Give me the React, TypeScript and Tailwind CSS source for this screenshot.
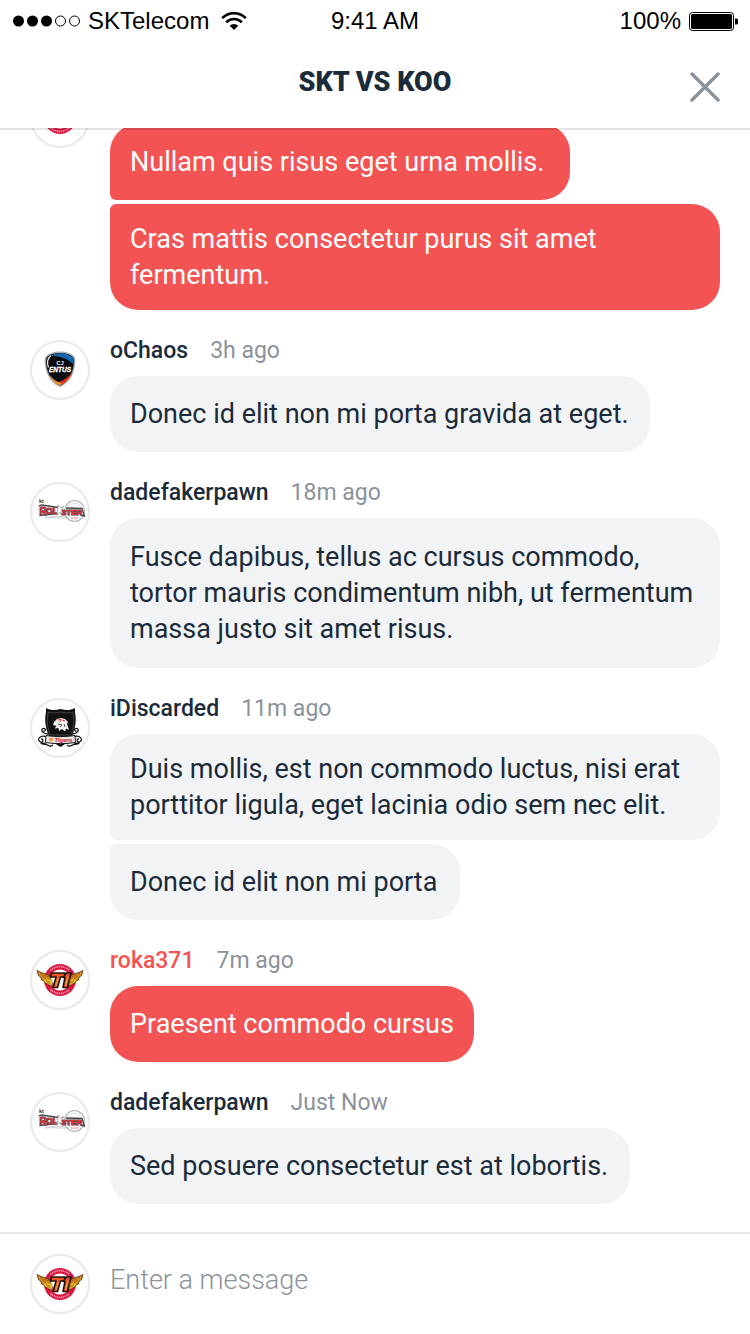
import type { ReactNode } from "react";

function T1Logo() {
  return (
    <svg viewBox="0 0 60 60" className="size-full" role="img" aria-label="SKT T1">
      <circle cx="30" cy="30" r="16" fill="#dc1740" />
      <circle cx="30" cy="30" r="10.500" fill="#fff" />
      <path d="M20.500 20.500a13.400 13.400 0 0 1 19 0M20.500 39.500a13.400 13.400 0 0 0 19 0" fill="none" stroke="#f6a9b7" strokeWidth="1.600" strokeDasharray="1.200 .7" />
      <path d="M7 20.500c4 2.500 9 3 13 5.500l3.500 10.500-4.500-1-1-1.500-3-1-1-2-2.500-1-.5-2.500-2.500-2Z" fill="#d98a1c" stroke="#4a3014" strokeWidth=".8" />
      <path d="M53 20.500c-4 2.500-9 3-13 5.500l-3.500 10.500 4.500-1 1-1.500 3-1 1-2 2.500-1 .5-2.500 2.500-2Z" fill="#d98a1c" stroke="#4a3014" strokeWidth=".8" />
      <path d="m16 28.500 5 2 .5 4M14.500 30.500l5 3.500M44 28.500l-5 2-.5 4M45.500 30.500l-5 3.500" fill="none" stroke="#eed12c" strokeWidth="1.600" />
      <path d="m10 23.500 10 4M12.500 26.500l7 3M16 31.500l4 2M50 23.500l-10 4M47.500 26.500l-7 3M44 31.500l-4 2" stroke="#7a4a18" strokeWidth=".6" />
      <path d="M21.500 23h13.500l-1 4h-3.500L27.500 37.500h-4.500L26 27h-5.500ZM36.500 23h4.500l-3.500 14.500h-4.500l2-10h-2Z" fill="#ee5528" stroke="#20130f" strokeWidth="1.600" strokeLinejoin="round" />
      <path d="m28.500 28-2.500 8M38 27l-2.500 9" stroke="#f59a31" strokeWidth="1.200" />
    </svg>
  );
}

function EntusLogo() {
  return (
    <svg viewBox="0 0 60 60" className="size-full" role="img" aria-label="CJ Entus">
      <path d="M30 11.500c6 0 11 1.500 14 4.500 2 2.500 1.500 7 .5 12-1.500 8-7 16-14.500 19-7.500-3-13-11-14.500-19-1-5-1.500-9.500.5-12 3-3 8-4.500 14-4.500Z" fill="#a9abad" />
      <path d="M30 13c5.500 0 10.200 1.300 12.800 4 1.700 2.300 1.200 6.500.3 11-1.500 7.500-6.500 14.500-13.100 17.500-6.600-3-11.600-10-13.100-17.500-.9-4.500-1.400-8.700.3-11 2.600-2.700 7.300-4 12.800-4Z" fill="#0b0c10" />
      <path d="M21 15.500c7-3.500 16-3 21.500 1.500 1.500 2 1 4.500.8 7.500-4-5-11-8-22.300-9Z" fill="#1767ad" />
      <path d="M42.500 32c-2 6-6 10.500-12.500 13.500-1-.5-1.500-1.500-2-3 6-2 10.500-5.500 14.500-10.500Z" fill="#e6371e" />
      <path d="M19.500 35c2 4.500 5.500 8.500 10.500 10.500l1.500-2.500c-5-1-8.500-4-12-8Z" fill="#f49b20" />
      <path d="M21 15.500c-3.500 3-4 8-2.500 12" fill="none" stroke="#e8e8e8" strokeWidth="1.200" />
      <text x="30" y="25" textAnchor="middle" fill="#e4e4e4" fontFamily="Liberation Sans, sans-serif" fontSize="6" fontWeight="700">CJ</text>
      <text x="30" y="32" textAnchor="middle" fill="#fff" stroke="#fff" strokeWidth=".3" fontFamily="Liberation Sans, sans-serif" fontSize="6.500" fontWeight="700" fontStyle="italic">ENTUS</text>
    </svg>
  );
}

function RolsterLogo() {
  return (
    <svg viewBox="0 0 60 60" className="size-full" role="img" aria-label="KT Rolster">
      <ellipse cx="44.500" cy="29" rx="10" ry="10.500" fill="#f9f9f9" stroke="#b4b6b8" strokeWidth="1.200" />
      <ellipse cx="44.500" cy="29" rx="7.500" ry="8" fill="none" stroke="#dcddde" strokeWidth=".8" />
      <path d="M38 35.500c-8-1.500-16-2-23 .5 8-1 17 .5 24 0" fill="none" stroke="#c8c8c8" strokeWidth=".9" />
      <path d="m8.500 24 3-1 17 2.500M36 26l16 .5 2.500 7.500-4-1M9.500 33.500 27 31.500" fill="none" stroke="#4a4245" strokeWidth="1.300" />
      <text x="9" y="21" fill="#343036" fontFamily="Liberation Sans, sans-serif" fontSize="5.500" fontWeight="700">kt</text>
      <g fill="#ee2c37" stroke="#574a4e" strokeWidth="1.200" paintOrder="stroke" fontFamily="Liberation Sans, sans-serif" fontWeight="700">
        <text x="9.500" y="32.500" fontSize="10">R</text>
        <text x="16" y="32" fontSize="8.500">OL</text>
        <text x="31" y="32.500" fontSize="8">STER</text>
      </g>
      <path d="m28 23 2.500 3 3-1.500-2 3.500 1 4-3-1.500-3 2 1-4Z" fill="#fff" stroke="#666" strokeWidth=".6" />
      <path d="M41 36h7" stroke="#ec6870" strokeWidth="1.200" strokeDasharray="1.500 1" />
    </svg>
  );
}

function TigersLogo() {
  return (
    <svg viewBox="0 0 60 60" className="size-full" role="img" aria-label="KOO Tigers">
      <g fill="none" stroke="#151515" strokeWidth="1.300">
        <path d="M18 36c-5 0-8-4-5-5.500 3-1 3 3 .5 2.500M17 39c-7-3-11 3-6.500 5 3 .5 3-3.500.5-3M20 48c-5-3-9-1-9-3 6-1 7 6 12 2M42 36c5 0 8-4 5-5.500-3-1-3 3-.5 2.500M43 39c7-3 11 3 6.500 5-3 .5-3-3.500-.5-3M40 48c5-3 9-1 9-3-6-1-7 6-12 2" />
      </g>
      <path d="M16 10c5 2.500 9 2.500 14.500 1 5.500 1.500 9.500 1.500 14.500-1-.5 5 1.500 9 .5 15.500C44 37 38.500 45 30.500 49c-8-4-14-12-15-23.500-1-6.500 1-10.500.5-15.500Z" fill="#101010" />
      <path d="M18 14c4 1.500 8 1 12.500 0 4.500 1 8.500 1.500 12.500 0 0 5 1.500 8 .5 13-.7 4-1.500 7-3 10h-20c-1.500-3-2.300-6-3-10-1-5 .5-8 .5-13Z" fill="none" stroke="#666" strokeWidth=".6" />
      <path d="m24 24 3-3 4-1 4 1 3 3-1 2 2 6-3-1.500-1 3-3-2.500-3 2-.5-3-4 .5 2-2.500-3.500-1Z" fill="#f5f5f5" />
      <path d="m28 22 3-1-1 3M32 22l3 1" fill="none" stroke="#d63b48" strokeWidth="1" />
      <path d="m28 26 4 1-2 2M34 26l1 3" fill="none" stroke="#222" strokeWidth=".8" />
      <path d="M16 37.500c10 1.500 19 1.500 29 0l.5 7c-10 1.500-20 1.500-30 0Z" fill="#ece9e6" stroke="#151515" strokeWidth="1" />
      <circle cx="21" cy="41.500" r="2" fill="#efa13a" />
      <text x="24.500" y="43.500" fill="#d7323f" stroke="#d7323f" strokeWidth=".2" fontFamily="Liberation Sans, sans-serif" fontSize="6" fontWeight="700" fontStyle="italic">Tigers</text>
    </svg>
  );
}

function Avatar({ children }: { children: ReactNode }) {
  return (
    <div className="relative size-[60px] shrink-0 rounded-full bg-white">
      {children}
      <div className="absolute inset-0 rounded-full border-2 border-[#e8e9ea]" />
    </div>
  );
}

type Message = { text: string; size: string };
type Group = { author?: string; time?: string; logo: ReactNode; own?: boolean; messages: Message[] };

const groups: Group[] = [
  {
    logo: <T1Logo />,
    own: true,
    messages: [
      { text: "Nullam quis risus eget urna mollis.", size: "w-[460px]" },
      { text: "Cras mattis consectetur purus sit amet fermentum.", size: "w-[610px]" },
    ],
  },
  {
    author: "oChaos",
    time: "3h ago",
    logo: <EntusLogo />,
    messages: [{ text: "Donec id elit non mi porta gravida at eget.", size: "w-[540px]" }],
  },
  {
    author: "dadefakerpawn",
    time: "18m ago",
    logo: <RolsterLogo />,
    messages: [
      {
        text: "Fusce dapibus, tellus ac cursus commodo, tortor mauris condimentum nibh, ut fermentum massa justo sit amet risus.",
        size: "w-[610px] min-h-[150px]",
      },
    ],
  },
  {
    author: "iDiscarded",
    time: "11m ago",
    logo: <TigersLogo />,
    messages: [
      { text: "Duis mollis, est non commodo luctus, nisi erat porttitor ligula, eget lacinia odio sem nec elit.", size: "w-[610px]" },
      { text: "Donec id elit non mi porta", size: "w-[350px]" },
    ],
  },
  {
    author: "roka371",
    time: "7m ago",
    logo: <T1Logo />,
    own: true,
    messages: [{ text: "Praesent commodo cursus", size: "w-[364px]" }],
  },
  {
    author: "dadefakerpawn",
    time: "Just Now",
    logo: <RolsterLogo />,
    messages: [{ text: "Sed posuere consectetur est at lobortis.", size: "w-[520px]" }],
  },
];

function MessageGroup({ author, time, logo, own, messages }: Group) {
  return (
    <li className="flex shrink-0 gap-5">
      <Avatar>{logo}</Avatar>
      <div className="min-w-0 flex-1">
        <div className="mb-3.5 flex h-[22px] gap-[22px] text-[23px] leading-[22px] font-medium">
          {author && <span className={own ? "text-[#f45353]" : "text-[#1b2b3a]"}>{author}</span>}
          {time && <span className="font-normal text-[#8b939a]">{time}</span>}
        </div>
        <div className="flex flex-col items-start gap-1">
          {messages.map((m, i) => (
            <div
              key={m.text}
              className={`flex max-w-full items-center rounded-[28px] py-[17px] pr-4 pl-5 text-[27px] leading-9 ${m.size} ${
                m.size.includes("min-h") ? "" : "min-h-[76px]"
              } ${own ? "bg-[#f45353] text-white" : "bg-[#f2f3f5] text-[#1b2b3a]"} ${i > 0 ? "rounded-tl-md" : ""} ${
                i < messages.length - 1 ? "rounded-bl-md" : ""
              }`}
            >
              <p>{m.text}</p>
            </div>
          ))}
        </div>
      </div>
    </li>
  );
}

function StatusBar() {
  return (
    <div className="grid h-[42px] grid-cols-[1fr_auto_1fr] items-center px-3 font-['Liberation_Sans',Arial,sans-serif] text-2xl text-black">
      <div className="flex items-center">
        <svg viewBox="0 0 70 14" className="mr-1.5 h-3.5 w-[70px]" aria-hidden="true">
          <circle cx="6.500" cy="7" r="5.500" />
          <circle cx="20.500" cy="7" r="5.500" />
          <circle cx="34.500" cy="7" r="5.500" />
          <circle cx="48.500" cy="7" r="5" fill="none" stroke="#000" />
          <circle cx="62.500" cy="7" r="5" fill="none" stroke="#000" />
        </svg>
        <span>SKTelecom</span>
        <svg viewBox="0 0 26 18" className="ml-3 h-[18px] w-[26px]" fill="none" stroke="#000" strokeWidth="2.600" aria-hidden="true">
          <path d="M1.200 6.200a16.500 16.500 0 0 1 23.600 0M5.200 10.300a11 11 0 0 1 15.600 0" />
          <path d="m13 18-4.300-4.300a6.200 6.200 0 0 1 8.600 0Z" fill="#000" stroke="none" />
        </svg>
      </div>
      <span>9:41 AM</span>
      <div className="flex items-center justify-end gap-2">
        <span>100%</span>
        <svg viewBox="0 0 49 19" className="h-[19px] w-[49px]" aria-hidden="true">
          <rect x=".5" y=".5" width="44" height="18" rx="3" fill="none" stroke="#000" />
          <rect x="2" y="2" width="41" height="15" rx="1.500" />
          <path d="M46 6.500h1.500a1.500 1.500 0 0 1 1.500 1.500v3a1.500 1.500 0 0 1-1.500 1.500H46Z" />
        </svg>
      </div>
    </div>
  );
}

export default function App() {
  return (
    <div className="flex h-screen flex-col bg-white font-[Roboto,sans-serif]">
      <header className="relative z-10 shrink-0 border-b-2 border-black/10 bg-white bg-clip-padding">
        <StatusBar />
        <div className="grid h-[86px] grid-cols-[1fr_auto_1fr] items-start px-[30px] pt-[26px]">
          <h1 className="col-start-2 text-[27px] leading-7 font-black text-[#1b2b3a]">SKT VS KOO</h1>
          <button type="button" aria-label="Close" className="mt-1 justify-self-end">
            <svg viewBox="0 0 30 30" className="size-[30px]" fill="none" stroke="#8b939a" strokeWidth="3.500" strokeLinecap="round">
              <path d="m2 2 26 26M28 2 2 28" />
            </svg>
          </button>
        </div>
      </header>
      <main className="-mt-0.5 flex min-h-0 flex-1 flex-col justify-end overflow-hidden">
        <ul className="flex flex-col gap-[30px] px-[30px] pb-7">
          {groups.map((g, i) => (
            <MessageGroup key={i} {...g} />
          ))}
        </ul>
      </main>
      <footer className="flex shrink-0 gap-5 border-t-2 border-[#e8e9ea] px-[30px] py-5">
        <Avatar>
          <T1Logo />
        </Avatar>
        <input
          type="text"
          aria-label="Enter a message"
          placeholder="Enter a message"
          className="mt-2 h-9 min-w-0 flex-1 text-[27px] text-[#1b2b3a] outline-none placeholder:font-light placeholder:text-[#8b939a]"
        />
      </footer>
    </div>
  );
}
